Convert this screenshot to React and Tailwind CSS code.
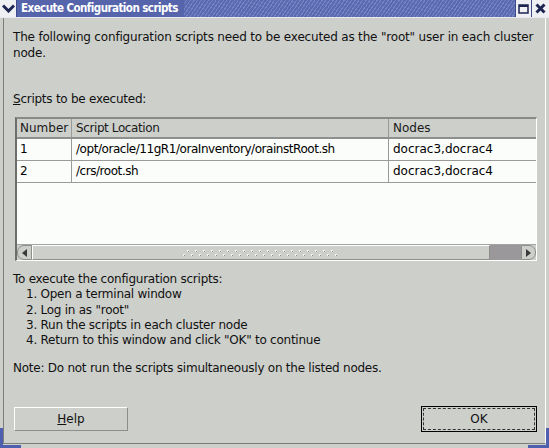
import React from 'react';

const rows = [
  { n: '1', loc: '/opt/oracle/11gR1/oraInventory/orainstRoot.sh', nodes: 'docrac3,docrac4' },
  { n: '2', loc: '/crs/root.sh', nodes: 'docrac3,docrac4' },
];

const steps = [
  '1. Open a terminal window',
  '2. Log in as "root"',
  '3. Run the scripts in each cluster node',
  '4. Return to this window and click "OK" to continue',
];

const TitleBar = () => (
  <div className="flex h-[18px] bg-[#5664ab] border-b border-[#e8e9ee]">
    <div className="w-[17px] h-[17px] bg-[#eef0f4] border-r border-[#3d4a8a] flex items-center justify-center">
      <svg width="13" height="9" viewBox="0 0 13 9">
        <path d="M1 1.5 L6.5 7 L12 1.5" stroke="#1d2552" strokeWidth="3" fill="none" />
      </svg>
    </div>
    <span className="pl-[4px] pr-[6px] text-white font-bold font-['DejaVu_Sans_Condensed','DejaVu_Sans',sans-serif] text-[11.5px] leading-[17px] tracking-[-0.55px]">
      Execute Configuration scripts
    </span>
    <div className="flex-1 bg-[repeating-linear-gradient(-55deg,#5b6aaf_0px,#5b6aaf_2px,#7484c4_2px,#7484c4_3px)]" />
    <div className="w-[16px] h-[17px] bg-[#eef0f4] border-l border-[#3d4a8a] flex items-center justify-center">
      <svg width="11" height="10" viewBox="0 0 11 10">
        <rect x="1" y="1" width="9" height="8" stroke="#1d2552" strokeWidth="1.5" fill="none" />
        <rect x="1" y="1" width="9" height="2" fill="#1d2552" />
      </svg>
    </div>
    <div className="w-[18px] h-[17px] bg-[#eef0f4] border-l border-[#3d4a8a] flex items-center justify-center">
      <svg width="11" height="11" viewBox="0 0 11 11">
        <path d="M1.5 1.5 L9.5 9.5 M9.5 1.5 L1.5 9.5" stroke="#1d2552" strokeWidth="3" />
      </svg>
    </div>
  </div>
);

const Grip = () => (
  <svg width="156" height="8" viewBox="0 0 156 8">
    {Array.from({ length: 20 }).map((_, i) => (
      <rect key={'a' + i} x={4 + i * 8} y="1" width="2" height="2" fill="#f4f4f4" />
    ))}
    {Array.from({ length: 20 }).map((_, i) => (
      <rect key={'b' + i} x={i * 8} y="5" width="2" height="2" fill="#f4f4f4" />
    ))}
    {Array.from({ length: 20 }).map((_, i) => (
      <rect key={'c' + i} x={5 + i * 8} y="2" width="1" height="1" fill="#8a8a8a" />
    ))}
    {Array.from({ length: 20 }).map((_, i) => (
      <rect key={'d' + i} x={1 + i * 8} y="6" width="1" height="1" fill="#8a8a8a" />
    ))}
  </svg>
);

const ScrollBar = () => (
  <div className="flex h-[16px] border-t border-[#a4a5a2] bg-[#cdcfcb]">
    <div className="w-[15px] h-[15px] rounded-l-[7px] border border-[#8d8e8b] bg-[#cdcfcb] flex items-center justify-center">
      <svg width="5" height="8" viewBox="0 0 5 8"><path d="M5 0 L0 4 L5 8 Z" fill="#3a3a3a" /></svg>
    </div>
    <div className="w-[458px] h-[15px] border border-t-white border-l-white border-[#8d8e8b] bg-[#cdcfcb] flex items-center justify-center">
      <Grip />
    </div>
    <div className="flex-1 h-[15px] bg-[#9a989a]" />
    <div className="w-[15px] h-[15px] rounded-r-[7px] border border-[#8d8e8b] bg-[#cdcfcb] flex items-center justify-center">
      <svg width="5" height="8" viewBox="0 0 5 8"><path d="M0 0 L5 4 L0 8 Z" fill="#3a3a3a" /></svg>
    </div>
  </div>
);

const Table = () => (
  <div className="ml-[11px] mt-[10px] w-[522px] h-[144px] border-t-2 border-l-2 border-t-[#8a8b88] border-l-[#6d6e6b] border-r border-b border-r-white border-b-white flex flex-col">
    <div className="flex h-[20px] bg-[#cdcfcb] border-b-2 border-[#8f908d] text-[#1a1a1a]">
      <div className="w-[55px] pl-[3px] border-r border-[#9a9b98] leading-[18px]">Number</div>
      <div className="w-[317px] pl-[4px] border-r border-[#9a9b98] leading-[18px] tracking-[-0.4px]">Script Location</div>
      <div className="flex-1 pl-[4px] leading-[18px]">Nodes</div>
    </div>
    <div className="flex-1 bg-[#fbfdfa]">
      {rows.map((r) => (
        <div key={r.n} className="flex h-[22px] border-b border-[#9a9b98] text-black">
          <div className="w-[55px] pl-[3px] border-r border-[#9a9b98] leading-[21px]">{r.n}</div>
          <div className="w-[317px] pl-[4px] border-r border-[#9a9b98] leading-[21px] tracking-[-0.45px]">{r.loc}</div>
          <div className="flex-1 pl-[4px] leading-[21px]">{r.nodes}</div>
        </div>
      ))}
    </div>
    <ScrollBar />
  </div>
);

export default function App() {
  return (
    <div className="w-[549px] h-[448px] bg-[#cdcfcb] overflow-hidden flex flex-col font-['DejaVu_Sans',sans-serif] text-[12px] text-[#111]">
      <TitleBar />
      <div className="flex-1 flex px-[3px] pb-[4px] relative">
        <div className="flex-1 flex flex-col border-l border-[#7d7e7b] border-r border-r-white border-b border-b-[#7d7e7b]">
          <p className="pl-[9px] pt-[11px] leading-[16px] tracking-[-0.18px]">
            The following configuration scripts need to be executed as the "root" user in each cluster node.
          </p>
          <p className="pl-[9px] mt-[30px] leading-[16px] tracking-[-0.25px]">
            <span className="underline">S</span>cripts to be executed:
          </p>
          <Table />
          <div className="pl-[9px] mt-[11px] leading-[15.3px] tracking-[-0.25px]">
            <p>To execute the configuration scripts:</p>
            {steps.map((s) => (
              <p key={s} className="pl-[13px]">{s}</p>
            ))}
            <p className="mt-[13px]">Note: Do not run the scripts simultaneously on the listed nodes.</p>
          </div>
          <div className="mt-auto mb-[11px] flex items-center justify-between pl-[10px] pr-[8px]">
            <div className="w-[114px] h-[24px] border border-t-white border-l-white border-[#8d8e8b] bg-[#cdcfcb] flex items-center justify-center">
              <span><span className="underline">H</span>elp</span>
            </div>
            <div className="w-[116px] h-[26px] border border-black p-[1px]">
              <div className="w-full h-full border border-dashed border-[#333] flex items-center justify-center">
                OK
              </div>
            </div>
          </div>
        </div>
        <div className="absolute left-0 bottom-0 w-[3px] h-[20px] bg-[#4f5fb0]" />
        <div className="absolute left-0 bottom-0 w-[21px] h-[3px] bg-[#4f5fb0]" />
        <div className="absolute right-0 bottom-0 w-[3px] h-[20px] bg-[#4f5fb0]" />
        <div className="absolute right-0 bottom-0 w-[21px] h-[3px] bg-[#4f5fb0]" />
      </div>
    </div>
  );
}
